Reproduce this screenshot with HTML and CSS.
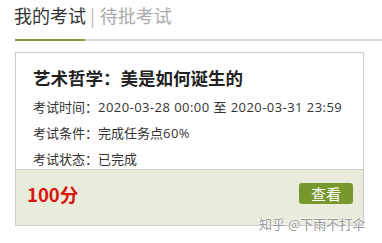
FILE: index.html
```html
<!DOCTYPE html>
<html lang="zh">
<head>
<meta charset="utf-8">
<link rel="stylesheet" href="styles.css">
</head>
<body>
<div class="page">
  <div class="tabs">
    <span class="tab active">我的考试</span>
    <span class="sep">|</span>
    <span class="tab">待批考试</span>
  </div>
  <div class="rule"><div class="rule-active"></div></div>
  <div class="card">
    <div class="card-body">
      <div class="title">艺术哲学：美是如何诞生的</div>
      <div class="info">考试时间：<span class="num">2020-03-28 00:00 至 2020-03-31 23:59</span></div>
      <div class="info">考试条件：完成任务点<span class="num">60%</span></div>
      <div class="info">考试状态：已完成</div>
    </div>
    <div class="card-foot">
      <span class="score">100分</span>
      <span class="btn">查看</span>
    </div>
  </div>
  <div class="watermark">知乎 @下雨不打伞</div>
</div>
</body>
</html>
```
FILE: styles.css
```css
html, body {
  margin: 0;
  padding: 0;
  background: #fff;
}
body {
  font-family: "Noto Sans CJK SC", "Noto Sans", sans-serif;
  color: #333;
}
.page {
  position: relative;
  width: 382px;
  height: 243px;
  overflow: hidden;
}
.tabs {
  display: flex;
  align-items: center;
  height: 30px;
  padding-left: 14px;
  margin-bottom: 9px;
  font-size: 18px;
  line-height: 30px;
}
.tab {
  color: #aaa;
}
.tab.active {
  color: #333;
}
.sep {
  color: #bbb;
  margin: 0 5px 0 4px;
}
.rule {
  margin-left: 15px;
  height: 2px;
  background: #d9d9d9;
}
.rule-active {
  width: 70px;
  height: 2px;
  background: #869a45;
}
.card {
  margin: 11px 0 0 15px;
  width: 347px;
  border: 1px solid #cccccc;
}
.card-body {
  padding: 12px 0 0 17px;
  height: 104px;
}
.title {
  font-size: 17.5px;
  font-weight: bold;
  line-height: 26px;
  color: #222;
  margin-bottom: 3px;
}
.info {
  font-size: 13px;
  line-height: 25px;
  color: #333;
}
.num {
  font-family: "Open Sans", "Noto Sans CJK SC", sans-serif;
  letter-spacing: 0.45px;
}
.card-foot {
  border-top: 1px solid #cccccc;
  background: #e9ecdb;
  height: 56px;
  box-sizing: border-box;
  padding: 13px 10px 0 11px;
  display: flex;
  align-items: flex-start;
  justify-content: space-between;
}
.score {
  color: #d9140e;
  font-size: 18.5px;
  font-weight: bold;
  line-height: 22px;
}
.btn {
  background: #76982c;
  color: #fff;
  font-size: 15px;
  line-height: 21px;
  width: 54px;
  text-align: center;
  border-radius: 3px;
}
.watermark {
  position: absolute;
  left: 259px;
  top: 216px;
  font-size: 13px;
  line-height: 16px;
  color: #999;
  text-shadow: 0 0 2px #fff, 0 0 2px #fff;
}
```
